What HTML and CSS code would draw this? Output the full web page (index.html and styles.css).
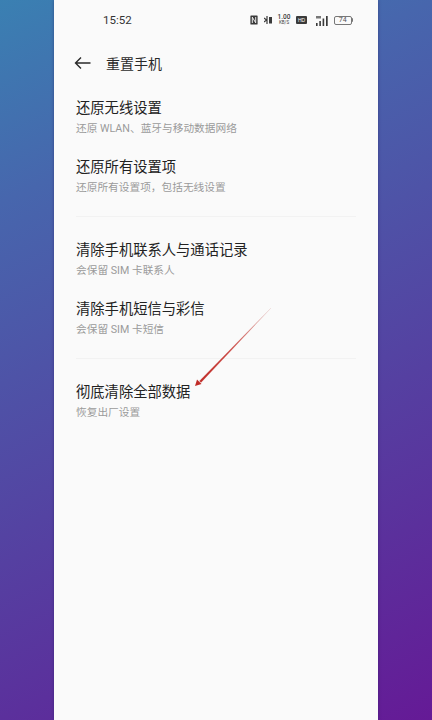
FILE: index.html
```html
<!DOCTYPE html>
<html lang="zh">
<head>
<meta charset="utf-8">
<title>重置手机</title>
<link rel="stylesheet" href="styles.css">
</head>
<body>
<main class="phone">
  <div class="status">
    <span class="time">15:52</span>
    <div class="status-icons">
      <svg class="ic-nfc" width="8" height="10" viewBox="0 0 8 10"><path d="M1 .5h6a.6.6 0 0 1 .6.6v7.800a.6.6 0 0 1-.6.6H1a.6.6 0 0 1-.6-.6V1.100A.6.6 0 0 1 1 .5z" fill="#3a3a3a"/><path d="M2.300 8V2.200l3.400 5.600V2" fill="none" stroke="#fafafa" stroke-width=".9"/></svg>
      <svg class="ic-bt" width="8" height="10" viewBox="0 0 8 10"><path d="M0 3l2.500 2L0 7M3 1v8" fill="none" stroke="#3a3a3a" stroke-width="1.200"/><path d="M5 2h3v6.500H5z" fill="#3a3a3a"/></svg>
      <span class="speed"><b>1.00</b><i>KB/S</i></span>
      <span class="hd">HD</span>
      <svg class="sig" width="12" height="11" viewBox="0 0 12 11"><path d="M0 8h1.600v3H0zM3.300 6h1.600v5H3.300zM6.600 3.500h1.600V11H6.600zM10 1h1.700v10H10z" fill="#3a3a3a"/><path d="M0 1h5v2.500H0z" fill="#777"/></svg>
      <span class="battery"><span class="batt-box">74</span><span class="batt-tip"></span></span>
    </div>
  </div>
  <header class="nav">
    <svg class="back" width="17" height="14" viewBox="0 0 17 14"><path d="M16.500 7H1.500M7 1.500L1.500 7 7 12.500" fill="none" stroke="#2a2a2a" stroke-width="1.400"/></svg>
    <h1>重置手机</h1>
  </header>
  <section class="group">
    <div class="item"><h2>还原无线设置</h2><p>还原 WLAN、蓝牙与移动数据网络</p></div>
    <div class="item"><h2>还原所有设置项</h2><p>还原所有设置项，包括无线设置</p></div>
  </section>
  <section class="group">
    <div class="item"><h2>清除手机联系人与通话记录</h2><p>会保留 SIM 卡联系人</p></div>
    <div class="item"><h2>清除手机短信与彩信</h2><p>会保留 SIM 卡短信</p></div>
  </section>
  <section class="group last">
    <div class="item"><h2>彻底清除全部数据</h2><p>恢复出厂设置</p></div>
  </section>
  <svg class="arrow" width="90" height="90" viewBox="0 0 90 90">
    <defs><linearGradient id="arrow-fade" x1="1" y1="0" x2="0" y2="1"><stop offset="0" stop-color="#e0b8b6"/><stop offset=".5" stop-color="#cc4f4a"/><stop offset="1" stop-color="#c02a26"/></linearGradient></defs>
    <path d="M81 4L9.500 77L11 78.500L81 4z" fill="url(#arrow-fade)" stroke="url(#arrow-fade)" stroke-width=".2"/>
    <path d="M5 82l2-6.500 4.500 4.500z" fill="#c02a26"/>
  </svg>
</main>
</body>
</html>
```
FILE: styles.css
```css
* { box-sizing: border-box; }
html, body { margin: 0; height: 100%; }
body {
  width: 432px;
  height: 720px;
  overflow: hidden;
  background: linear-gradient(155deg, #3a80b2 0%, #4766ad 22%, #5b309c 78%, #651a96 100%);
  font-family: "Liberation Sans", "Noto Sans CJK SC", sans-serif;
  display: flex;
  justify-content: center;
}
.phone {
  position: relative;
  width: 324px;
  height: 720px;
  background: #fafafa;
  box-shadow: 0 0 3px rgba(40, 30, 90, .5);
  padding: 0 22px;
}
.status {
  display: flex;
  align-items: center;
  justify-content: space-between;
  height: 20px;
  padding: 10px 3px 0 27px;
  box-sizing: content-box;
}
.time { font-family: Roboto, sans-serif; font-size: 11.500px; color: #333; }
.status-icons { display: flex; align-items: center; }
.ic-bt { margin-left: 6px; }
.speed { display: flex; flex-direction: column; align-items: center; width: 12px; margin-left: 6px; line-height: 5px; color: #3a3a3a; font-family: Roboto, sans-serif; }
.speed b { font-size: 6.500px; font-weight: 500; }
.speed i { font-size: 4.500px; font-style: normal; }
.hd { width: 11px; height: 8px; margin-left: 6px; background: #3a3a3a; color: #fafafa; font-size: 5px; line-height: 8px; text-align: center; border-radius: 1px; }
.sig { margin-left: 9px; }
.battery { display: flex; align-items: center; margin-left: 6px; }
.batt-box { width: 17.500px; height: 9px; border: 1px solid #777; border-radius: 2px; font-size: 7px; line-height: 7px; text-align: center; color: #555; font-family: Roboto, sans-serif; }
.batt-tip { width: 1.500px; height: 4px; background: #777; border-radius: 0 1px 1px 0; }
.nav { display: flex; align-items: center; gap: 15px; height: 28px; margin-top: 19px; }
.nav h1 { margin: 0; font-size: 14px; font-weight: 400; color: #2a2a2a; font-family: "Noto Sans CJK SC", sans-serif; }
.back { flex: none; margin-left: -2px; }
.group { border-bottom: 1px solid #f2f2f2; padding-bottom: 2px; margin-bottom: 22px; }
.group:first-of-type { margin-top: 20px; }
.group.last { border-bottom: 0; }
.item { height: 58.500px; }
.item h2 { margin: 0; font-size: 14.300px; line-height: 20px; font-weight: 400; color: #222; font-family: "Noto Sans CJK SC", sans-serif; }
.item p { margin: 4px 0 0; font-size: 10.700px; line-height: 16px; color: #9a9a9a; font-family: Roboto, "Noto Sans CJK SC", sans-serif; }
.arrow { position: absolute; left: 136px; top: 304px; }
```
